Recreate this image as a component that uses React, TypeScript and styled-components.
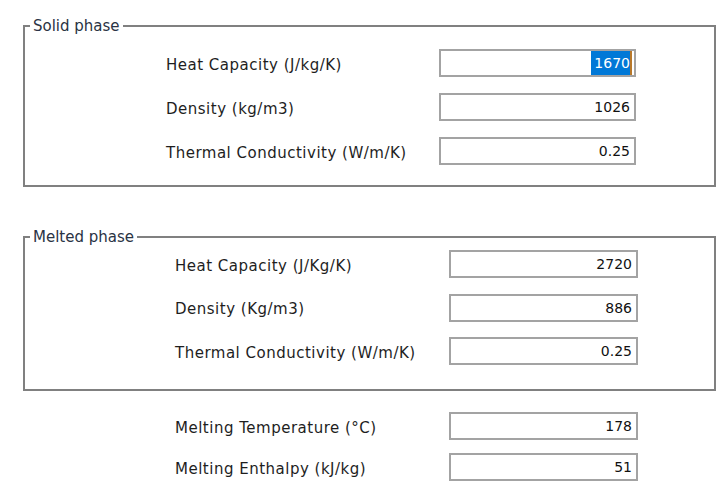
import React from "react"
import styled, { createGlobalStyle } from "styled-components"

const Global = createGlobalStyle`
  html, body {
    margin: 0;
    padding: 0;
    background: #ffffff;
  }
  body {
    font-family: "DejaVu Sans", Tahoma, sans-serif;
    font-size: 15px;
    color: #222;
    width: 728px;
    height: 492px;
    overflow: hidden;
  }
`

const Page = styled.div`
  padding: 18px 0 0 23px;
`

const Group = styled.fieldset<{ $mt: number; $pt: number; $pb: number }>`
  box-sizing: border-box;
  width: 693px;
  margin: ${p => p.$mt}px 0 0 0;
  padding: ${p => p.$pt}px 0 ${p => p.$pb}px 0;
  border: 2px solid #808080;
  min-inline-size: 0;
`

const Legend = styled.legend`
  margin-left: 5px;
  padding: 0 3px;
  font-size: 15px;
  line-height: 16px;
  color: #2a3344;
`

const Rows = styled.div<{ $label: number; $gap: number; $pl: number; $mt?: number }>`
  display: grid;
  grid-template-columns: ${p => p.$label}px auto;
  row-gap: ${p => p.$gap}px;
  align-items: center;
  padding-left: ${p => p.$pl}px;
  margin-top: ${p => p.$mt ?? 0}px;
`

const Label = styled.div`
  font-size: 15px;
  letter-spacing: 0.5px;
  padding-top: 3px;
  color: #1e1e1e;
  white-space: nowrap;
`

const Field = styled.div<{ $w: number }>`
  box-sizing: border-box;
  width: ${p => p.$w}px;
  height: 28px;
  border: 2px solid #a3a3a3;
  background: #fff;
  display: flex;
  align-items: center;
  justify-content: flex-end;
  padding-right: 4px;
  font-size: 14px;
  color: #111;
`

const Selected = styled.span`
  align-self: stretch;
  display: flex;
  align-items: center;
  margin-right: -2px;
  padding-left: 3px;
  background: #0078d7;
  color: #fff;
  border-right: 2px solid #b8782a;
`

type Row = { label: string; value: string; selected?: boolean }

const solid: Row[] = [
  { label: "Heat Capacity (J/kg/K)", value: "1670", selected: true },
  { label: "Density (kg/m3)", value: "1026" },
  { label: "Thermal Conductivity (W/m/K)", value: "0.25" },
]

const melted: Row[] = [
  { label: "Heat Capacity (J/Kg/K)", value: "2720" },
  { label: "Density (Kg/m3)", value: "886" },
  { label: "Thermal Conductivity (W/m/K)", value: "0.25" },
]

const melting: Row[] = [
  { label: "Melting Temperature (°C)", value: "178" },
  { label: "Melting Enthalpy (kJ/kg)", value: "51" },
]

const renderRows = (rows: Row[], w: number) =>
  rows.map((r, i) => (
    <React.Fragment key={i}>
      <Label>{r.label}</Label>
      <Field $w={w}>{r.selected ? <Selected>{r.value}</Selected> : r.value}</Field>
    </React.Fragment>
  ))

export default function App() {
  return (
    <>
      <Global />
      <Page>
        <Group $mt={0} $pt={15} $pb={20}>
          <Legend>Solid phase</Legend>
          <Rows $label={273} $gap={16} $pl={141}>
            {renderRows(solid, 197)}
          </Rows>
        </Group>
        <Group $mt={42} $pt={5} $pb={24}>
          <Legend>Melted phase</Legend>
          <Rows $label={274} $gap={15.5} $pl={150}>
            {renderRows(melted, 189)}
          </Rows>
        </Group>
        <Rows $label={274} $gap={13} $pl={152} $mt={21}>
          {renderRows(melting, 189)}
        </Rows>
      </Page>
    </>
  )
}
